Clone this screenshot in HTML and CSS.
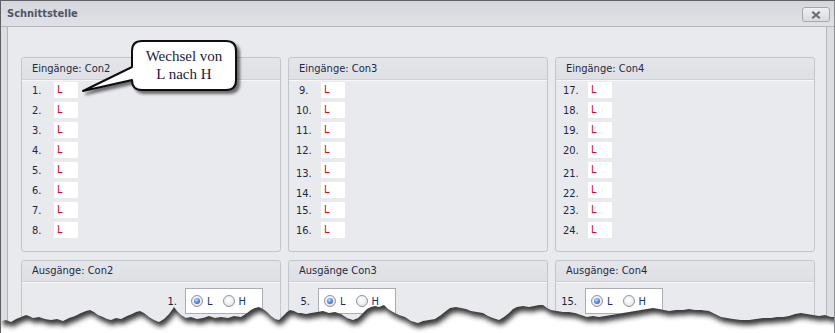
FILE: index.html
```html
<!DOCTYPE html>
<html lang="de">
<head>
<meta charset="utf-8">
<title>Schnittstelle</title>
<link rel="stylesheet" href="styles.css">
</head>
<body>
<div class="window">
  <div class="titlebar">
    <span class="title">Schnittstelle</span>
    <button class="close" type="button" aria-label="Schließen">
      <svg width="10" height="8" viewBox="0 0 10 8"><path d="M1.2 0.8 L8.8 7.2 M8.8 0.8 L1.2 7.2" stroke="#6b6c70" stroke-width="2.1" fill="none"/></svg>
    </button>
  </div>
  <div class="body">
    <div class="grid">
      <section class="group c1">
        <div class="ghead">Eingänge: Con2</div>
        <ul class="inputs">
          <li><span class="num">1.</span><span class="val">L</span></li>
          <li><span class="num">2.</span><span class="val">L</span></li>
          <li><span class="num">3.</span><span class="val">L</span></li>
          <li class="shift"><span class="num">4.</span><span class="val">L</span></li>
          <li><span class="num">5.</span><span class="val">L</span></li>
          <li><span class="num">6.</span><span class="val">L</span></li>
          <li><span class="num">7.</span><span class="val">L</span></li>
          <li><span class="num">8.</span><span class="val">L</span></li>
        </ul>
      </section>
      <section class="group c2">
        <div class="ghead">Eingänge: Con3</div>
        <ul class="inputs">
          <li><span class="num one">9.</span><span class="val">L</span></li>
          <li><span class="num">10.</span><span class="val">L</span></li>
          <li><span class="num">11.</span><span class="val">L</span></li>
          <li class="shift"><span class="num">12.</span><span class="val">L</span></li>
          <li><span class="num low">13.</span><span class="val">L</span></li>
          <li><span class="num low">14.</span><span class="val">L</span></li>
          <li><span class="num">15.</span><span class="val">L</span></li>
          <li><span class="num">16.</span><span class="val">L</span></li>
        </ul>
      </section>
      <section class="group c3">
        <div class="ghead">Eingänge: Con4</div>
        <ul class="inputs">
          <li><span class="num">17.</span><span class="val">L</span></li>
          <li><span class="num">18.</span><span class="val">L</span></li>
          <li><span class="num">19.</span><span class="val">L</span></li>
          <li class="shift"><span class="num">20.</span><span class="val">L</span></li>
          <li><span class="num low">21.</span><span class="val">L</span></li>
          <li><span class="num low">22.</span><span class="val">L</span></li>
          <li><span class="num">23.</span><span class="val">L</span></li>
          <li><span class="num">24.</span><span class="val">L</span></li>
        </ul>
      </section>

      <section class="group out c1">
        <div class="ghead">Ausgänge: Con2</div>
        <div class="orow">
          <span class="onum">1.</span>
          <div class="radios">
            <label class="opt"><span class="radio on"></span>L</label>
            <label class="opt"><span class="radio"></span>H</label>
          </div>
        </div>
      </section>
      <section class="group out c2">
        <div class="ghead">Ausgänge Con3</div>
        <div class="orow">
          <span class="onum">5.</span>
          <div class="radios">
            <label class="opt"><span class="radio on"></span>L</label>
            <label class="opt"><span class="radio"></span>H</label>
          </div>
        </div>
      </section>
      <section class="group out c3">
        <div class="ghead">Ausgänge: Con4</div>
        <div class="orow">
          <span class="onum">15.</span>
          <div class="radios">
            <label class="opt"><span class="radio on"></span>L</label>
            <label class="opt"><span class="radio"></span>H</label>
          </div>
        </div>
      </section>
    </div>
  </div>

  <div class="callout">
    <svg class="bubble" width="260" height="110" viewBox="0 0 260 110">
      <defs>
        <filter id="bshadow" x="-10%" y="-10%" width="130%" height="140%">
          <feGaussianBlur in="SourceAlpha" stdDeviation="1.4"/>
          <feOffset dx="3" dy="3" result="b"/>
          <feComponentTransfer><feFuncA type="linear" slope="0.55"/></feComponentTransfer>
          <feMerge><feMergeNode/><feMergeNode in="SourceGraphic"/></feMerge>
        </filter>
      </defs>
      <path d="M141,40 H225 Q235,40 235,50 V79 Q235,89 225,89 H141 Q131,89 131,79 L82,90 L131,66 V50 Q131,40 141,40 Z" fill="#fff" stroke="#111" stroke-width="2" stroke-linejoin="round" filter="url(#bshadow)"/>
    </svg>
    <div class="callout-text"><span>Wechsel von</span><span>L nach H</span></div>
  </div>

  <svg class="torn" width="835" height="40" viewBox="0 293 835 40" aria-hidden="true">
    <defs>
      <clipPath id="below">
        <path d="M0,333 L0,321 5,320 10,322 15,319 20,317 25,315 28,316 32,318 38,317 44,319 50,320 56,319 62,321 68,318 74,316 80,313 85,311 89,310 93,312 97,315 102,317 106,319 110,320 115,318 120,319 126,316 131,314 135,312 139,311 143,313 148,317 153,320 158,322 163,319 168,314 171,310 173,307 176,311 180,315 185,318 190,317 196,319 202,318 208,316 214,318 220,317 227,318 233,316 240,317 246,313 250,310 254,308 258,307 262,309 266,312 270,316 274,319 278,320 282,316 286,312 289,310 293,311 297,313 300,313 305,314 310,313 316,312 322,311 328,313 334,312 340,314 346,318 352,320 357,318 362,313 366,309 370,307 374,306 378,307 383,305 387,309 392,312 398,315 404,317 410,321 417,323 422,321 428,320 434,319 440,315 445,311 449,308 455,307 460,308 465,309 470,311 476,312 482,313 487,316 492,318 498,320 503,317 508,313 512,309 516,307 522,306 528,307 533,306 538,305 542,305 546,308 550,310 556,311 562,312 568,312 574,313 580,315 586,317 592,316 598,317 604,316 610,315 616,314 622,313 628,312 634,311 640,310 646,309 652,308 658,309 663,310 668,311 675,310 682,310 688,309 694,310 700,310 708,311 714,314 720,317 726,318 732,319 740,320 748,320 755,319 762,318 770,318 776,317 782,317 788,316 794,314 800,313 806,314 812,315 818,316 824,315 830,317 835,317 L835,333 Z"/>
      </clipPath>
      <filter id="tblur" x="-5%" y="-100%" width="110%" height="300%">
        <feGaussianBlur stdDeviation="2.4"/>
      </filter>
    </defs>
    <rect x="0" y="293" width="835" height="40" fill="#fff" clip-path="url(#below)"/>
    <g clip-path="url(#below)">
      <path transform="translate(2,5)" fill="#2e2e2e" opacity="0.95" filter="url(#tblur)" d="M0,280 L0,321 5,320 10,322 15,319 20,317 25,315 28,316 32,318 38,317 44,319 50,320 56,319 62,321 68,318 74,316 80,313 85,311 89,310 93,312 97,315 102,317 106,319 110,320 115,318 120,319 126,316 131,314 135,312 139,311 143,313 148,317 153,320 158,322 163,319 168,314 171,310 173,307 176,311 180,315 185,318 190,317 196,319 202,318 208,316 214,318 220,317 227,318 233,316 240,317 246,313 250,310 254,308 258,307 262,309 266,312 270,316 274,319 278,320 282,316 286,312 289,310 293,311 297,313 300,313 305,314 310,313 316,312 322,311 328,313 334,312 340,314 346,318 352,320 357,318 362,313 366,309 370,307 374,306 378,307 383,305 387,309 392,312 398,315 404,317 410,321 417,323 422,321 428,320 434,319 440,315 445,311 449,308 455,307 460,308 465,309 470,311 476,312 482,313 487,316 492,318 498,320 503,317 508,313 512,309 516,307 522,306 528,307 533,306 538,305 542,305 546,308 550,310 556,311 562,312 568,312 574,313 580,315 586,317 592,316 598,317 604,316 610,315 616,314 622,313 628,312 634,311 640,310 646,309 652,308 658,309 663,310 668,311 675,310 682,310 688,309 694,310 700,310 708,311 714,314 720,317 726,318 732,319 740,320 748,320 755,319 762,318 770,318 776,317 782,317 788,316 794,314 800,313 806,314 812,315 818,316 824,315 830,317 840,317 L840,280 Z"/>
    </g>
  </svg>
</div>
</body>
</html>
```

FILE: styles.css
```css
html, body {
  margin: 0;
  padding: 0;
}

body {
  width: 835px;
  height: 333px;
  overflow: hidden;
  background: #fff;
  font-family: "DejaVu Sans Condensed", "DejaVu Sans", sans-serif;
  font-stretch: condensed;
  font-size: 11px;
  color: #1d2642;
}

.window {
  position: relative;
  height: 333px;
  box-sizing: border-box;
  border-top: 1px solid #5f6064;
  border-left: 1px solid #5f6064;
  border-right: 1px solid #8a8b8f;
  background: #dddee3;
  display: flex;
  flex-direction: column;
  overflow: hidden;
}

.titlebar {
  flex: none;
  height: 25px;
  display: flex;
  align-items: center;
  justify-content: space-between;
  padding: 0 4px 0 6px;
  border-bottom: 1px solid #b2b4ba;
  background: linear-gradient(#d6d7dc, #e0e1e6);
}

.title {
  font-weight: bold;
  font-size: 11px;
  color: #4f5567;
}

.close {
  width: 28px;
  height: 15px;
  margin-top: 2px;
  box-sizing: border-box;
  padding: 0;
  border: 1px solid #a4a7ae;
  border-radius: 3px;
  background: linear-gradient(#eff0f2, #d8d9de);
  display: flex;
  align-items: center;
  justify-content: center;
}

.close svg {
  display: block;
}

.body {
  flex: 1;
  margin: 0 7px 0 6px;
  border-left: 1px solid #b3b5bb;
  border-right: 1px solid #b3b5bb;
  background: #e9eaee;
  padding: 30px 11px 0 13px;
}

.grid {
  display: grid;
  grid-template-columns: repeat(3, 260px);
  column-gap: 7px;
  row-gap: 8px;
}

.group {
  border: 1px solid #c2c5cb;
  border-radius: 3px;
  background: #e9eaee;
}

.ghead {
  height: 21px;
  line-height: 21px;
  padding-left: 10px;
  background: linear-gradient(#e4e5e9, #dfe0e5);
  border-bottom: 1px solid #cdd0d5;
  border-radius: 3px 3px 0 0;
  box-shadow: 0 1px 0 #f7f7f9;
  color: #1d2a45;
}

.out .ghead {
  height: 20px;
  line-height: 20px;
}

.inputs {
  list-style: none;
  margin: 0;
  padding: 2px 0 13px 0;
}

.inputs li {
  display: flex;
  align-items: center;
  height: 16px;
  margin-bottom: 4px;
}

.inputs li:last-child {
  margin-bottom: 0;
}

.inputs li.shift {
  margin-top: 1px;
}

.num {
  width: 22px;
  padding-left: 10px;
  color: #1d2642;
}

.c2 .num,
.c3 .num {
  width: 25px;
  padding-left: 7px;
}

.c2 .num.one {
  width: 22px;
  padding-left: 10px;
}

.num.low {
  margin-top: 6px;
}

.val {
  width: 24px;
  height: 16px;
  line-height: 16px;
  box-sizing: border-box;
  padding-left: 3px;
  background: #fff;
  color: #ea0416;
}

.orow {
  display: flex;
  align-items: center;
  padding: 6px 0 10px 1px;
}

.c1 .orow {
  padding-left: 135px;
}

.onum {
  width: 20px;
  margin-right: 8px;
  text-align: right;
  color: #1d2642;
}

.radios {
  width: 78px;
  height: 26px;
  box-sizing: border-box;
  border: 1px solid #aaadb4;
  background: #fff;
  display: flex;
  align-items: center;
  padding-left: 5px;
  gap: 10px;
}

.opt {
  display: flex;
  align-items: center;
  gap: 4px;
  color: #22306a;
}

.radio {
  width: 12px;
  height: 12px;
  box-sizing: border-box;
  border-radius: 50%;
  border: 1px solid #8f949d;
  background: radial-gradient(circle at 45% 40%, #ffffff 0%, #eceef1 55%, #cfd2d8 100%);
  display: flex;
  align-items: center;
  justify-content: center;
}

.radio.on::after {
  content: "";
  width: 6px;
  height: 6px;
  border-radius: 50%;
  background: radial-gradient(circle at 40% 35%, #cfe0ff 0%, #5f8ae6 45%, #2347b8 100%);
}

.callout {
  position: absolute;
  left: 0;
  top: 0;
  width: 260px;
  height: 110px;
  pointer-events: none;
}

.bubble {
  display: block;
}

.callout-text {
  position: absolute;
  left: 131px;
  top: 46px;
  width: 104px;
  display: flex;
  flex-direction: column;
  align-items: center;
  font-family: "Liberation Serif", serif;
  font-stretch: normal;
  font-size: 15px;
  line-height: 18px;
  color: #1b1c3c;
}

.torn {
  position: absolute;
  left: 0;
  bottom: 0;
  display: block;
}
```
